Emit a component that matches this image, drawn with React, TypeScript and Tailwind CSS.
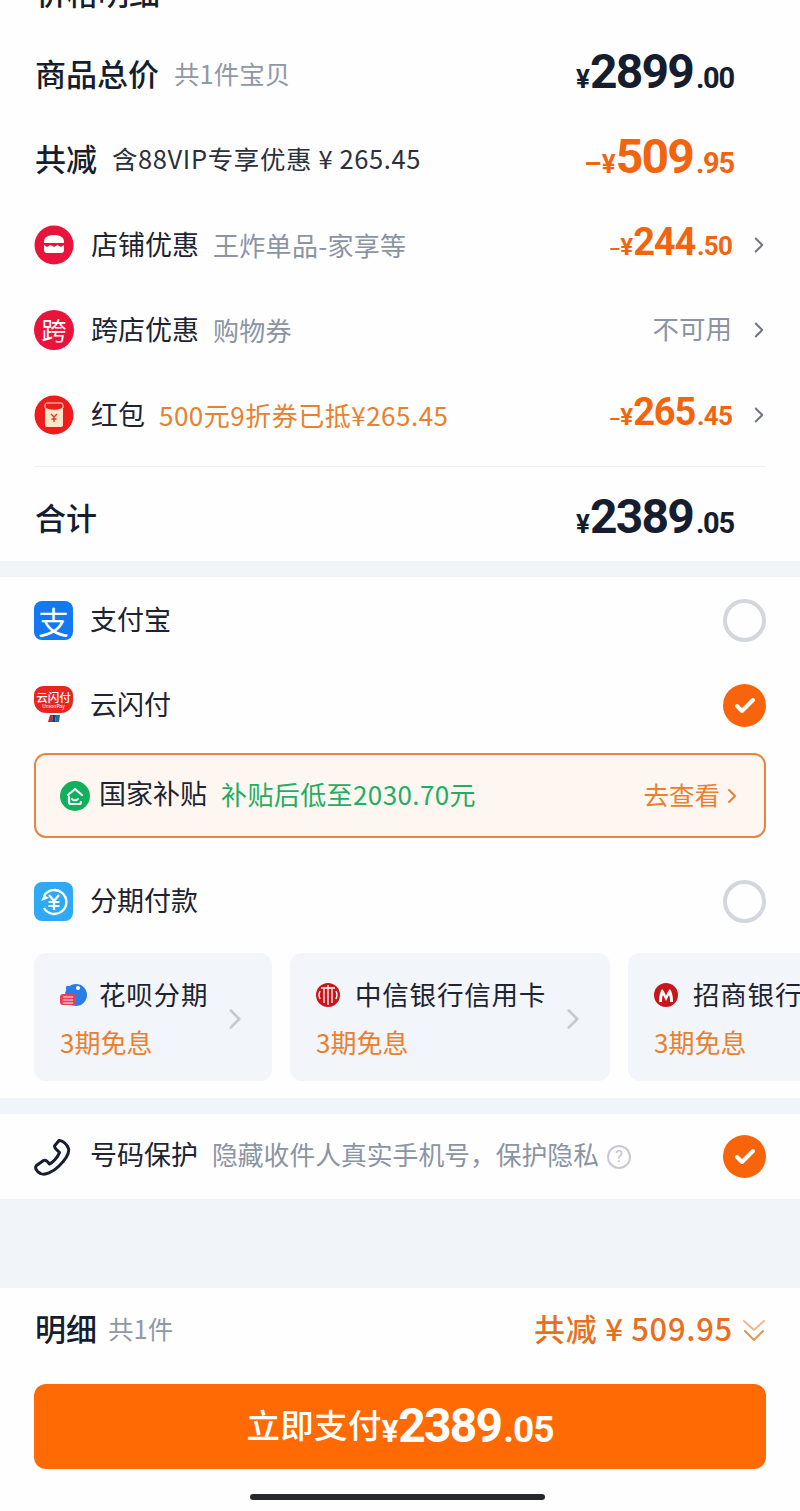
import React from "react";
import { Check, ChevronRight } from "lucide-react";

const cjk = "font-['Noto_Sans_CJK_SC','Noto_Sans',sans-serif]";
const num = "font-['Roboto','Liberation_Sans',sans-serif]";

function Price({ minus, int, dec, orange, mid }: { minus?: boolean; int: string; dec: string; orange?: boolean; mid?: boolean }) {
  const color = orange ? "text-[#f2650f]" : "text-[#161d2e]";
  return (
    <div className={`flex items-baseline font-bold pb-[5px] ${num} ${color}`}>
      {minus && <span className={mid ? "text-[18px] leading-none" : "text-[28px] leading-none"}>–</span>}
      <span className={mid ? "text-[24px] leading-none" : "text-[26px] leading-none"}>¥</span>
      <span className={mid ? "text-[38px] leading-none tracking-[-1.2px]" : "text-[48px] leading-none tracking-[-1.8px]"}>{int}</span>
      <span className={mid ? "text-[26px] leading-none tracking-[-0.8px] ml-[2px]" : "text-[29px] leading-none tracking-[-1.2px] ml-[3px]"}>.{dec}</span>
    </div>
  );
}

function Radio({ checked }: { checked?: boolean }) {
  if (checked) {
    return (
      <div className="w-[43px] h-[43px] rounded-full bg-[#f8640c] flex items-center justify-center">
        <Check size={24} strokeWidth={4} className="text-white" />
      </div>
    );
  }
  return <div className="w-[43px] h-[43px] rounded-full border-[4px] border-[#d3d6dc]" />;
}

function ShopIcon() {
  return (
    <svg width="40" height="40" viewBox="0 0 40 40">
      <circle cx="20" cy="20" r="19.5" fill="#e8143c" />
      <path d="M10 17c0-5 4-7 10-7s10 2 10 7v1H10z" fill="#fff" />
      <path d="M10 20l3 2 3.5-2 3.5 2 3.5-2 3.5 2 3-2v5c0 2-1 3-3 3H13c-2 0-3-1-3-3z" fill="#fff" />
    </svg>
  );
}

function RedPacketIcon() {
  return (
    <svg width="40" height="40" viewBox="0 0 40 40">
      <circle cx="20" cy="20" r="19.5" fill="#ee1c1c" />
      <rect x="11" y="8" width="18" height="24" rx="2" fill="#fbe6c8" />
      <path d="M11 10c0-1 1-2 2-2h14c1 0 2 1 2 2v3c-5 3-13 3-18 0z" fill="#ee1c1c" stroke="#fbe6c8" strokeWidth="1" />
      <path d="M17 19l3 3 3-3M20 22v5M17.500 24h5" stroke="#d9342b" strokeWidth="1.300" fill="none" />
    </svg>
  );
}

function CrossIcon() {
  return (
    <div className={`w-[40px] h-[40px] rounded-full bg-[#e8143c] flex items-center justify-center text-white text-[25px] leading-none ${cjk}`}>跨</div>
  );
}

function AlipayIcon() {
  return (
    <div className={`w-[39px] h-[39px] rounded-[8px] bg-[#1478f0] flex items-center justify-center text-white text-[31px] leading-none ${cjk}`}>支</div>
  );
}

function UnionIcon() {
  return (
    <div className="w-[39px] h-[39px] flex flex-col items-center">
      <div className={`w-[39px] h-[27px] rounded-t-[9px] rounded-b-[12px] bg-[#e8261f] flex flex-col items-center justify-center text-white ${cjk}`}>
        <span className="text-[11.5px] leading-[12px] font-medium">云闪付</span>
        <span className="text-[5px] leading-[5px]">UnionPay</span>
      </div>
      <svg width="12" height="7" viewBox="0 0 12 7" className="mt-[2px]">
        <path d="M2 0h3L4 7H0z" fill="#d3202a" />
        <path d="M5 0h3L7 7H4z" fill="#0d3b82" />
        <path d="M8 0h4l-1 7H7z" fill="#0b7c86" />
      </svg>
    </div>
  );
}

function SubsidyIcon() {
  return (
    <svg width="30" height="30" viewBox="0 0 30 30">
      <circle cx="15" cy="15" r="15" fill="#12b05c" />
      <path d="M8 14l7-6 7 6" stroke="#fff" strokeWidth="2.200" fill="none" strokeLinecap="round" strokeLinejoin="round" />
      <path d="M9 16v5c0 1 1 2 2 2h8c1 0 2-1 2-2" stroke="#fff" strokeWidth="2.200" fill="none" strokeLinecap="round" />
      <path d="M12 18c1 1.500 4 2 6 0" stroke="#fff" strokeWidth="1.800" fill="none" strokeLinecap="round" />
    </svg>
  );
}

function InstallIcon() {
  return (
    <div className={`w-[39px] h-[39px] rounded-[8px] bg-[#2fa8f5] flex items-center justify-center`}>
      <svg width="30" height="30" viewBox="0 0 30 30">
        <path d="M5 9A12 12 0 1 1 5 21" stroke="#fff" strokeWidth="2.400" fill="none" />
        <path d="M2 14l3-6 5 3z" fill="#fff" />
        <path d="M10 8l5 6 5-6M9.500 15h11M9.500 19h11M15 14v9" stroke="#fff" strokeWidth="2.200" fill="none" />
      </svg>
    </div>
  );
}

function HuabeiIcon() {
  return (
    <svg width="27" height="24" viewBox="0 0 27 24">
      <circle cx="16" cy="12" r="11" fill="#2a7de8" />
      <circle cx="18" cy="5" r="2" fill="#fff" />
      <circle cx="8" cy="5" r="2.200" fill="#2a7de8" />
      <rect x="0" y="11" width="16" height="11" rx="3" fill="#ee3b5a" />
      <path d="M3 14h10M3 17h10M3 20h10" stroke="#fff" strokeWidth="0.900" />
    </svg>
  );
}

function CiticIcon() {
  return (
    <svg width="24" height="24" viewBox="0 0 24 24">
      <circle cx="12" cy="12" r="12" fill="#c8161d" />
      <path d="M12 2v20M8 6v14M16 6v14M4 8a9 9 0 0 0 0 8M20 8a9 9 0 0 1 0 8M5 5h14" stroke="#fff" strokeWidth="1.300" fill="none" />
    </svg>
  );
}

function CmbIcon() {
  return (
    <svg width="24" height="24" viewBox="0 0 24 24">
      <circle cx="12" cy="12" r="12" fill="#c8161d" />
      <path d="M5 19c0-6 1-10 3-13 2 2 3 4 4 7 1-3 2-5 4-7 2 3 3 7 3 13h-3c0-3 0-5-1-7l-3 6-3-6c-1 2-1 4-1 7z" fill="#fff" />
    </svg>
  );
}

function PhoneIcon() {
  return (
    <svg width="37" height="38" viewBox="0 0 37 38" fill="none">
      <path
        d="M25 2.500c3-.5 8 3.500 9.500 8 1 4-2.500 10.500-9.500 17.500-6.500 6.500-14 9.500-18.500 7.500C2.500 34 .5 29.500 2.500 27.500l7-5c2-1 4.500 1.500 6 3.500 3-1 8.500-7 10-11.500-2-2-5-4-5-6.500z"
        stroke="#161d2e"
        strokeWidth="3"
        strokeLinejoin="round"
      />
    </svg>
  );
}

function DoubleDown() {
  return (
    <svg width="24" height="26" viewBox="0 0 24 26" fill="none" className="ml-[9px]">
      <path d="M2 3l10 9 10-9" stroke="#eeb88f" strokeWidth="2" strokeLinecap="round" strokeLinejoin="round" />
      <path d="M3 13l9 9 9-9" stroke="#e89358" strokeWidth="2" strokeLinecap="round" strokeLinejoin="round" />
    </svg>
  );
}

function DiscountRow({ icon, title, sub, subOrange, right }: { icon: React.ReactNode; title: string; sub: string; subOrange?: boolean; right: React.ReactNode }) {
  return (
    <div className="h-[85px] flex items-center px-[34px]">
      <div className="w-[57px] shrink-0">{icon}</div>
      <span className="text-[27px] text-[#1d2330]">{title}</span>
      <span className={`ml-[14px] text-[26px] ${subOrange ? "tracking-[0.5px] text-[#e8802f]" : "tracking-[0.3px] text-[#8a94a3]"}`}>{sub}</span>
      <div className="ml-auto flex items-center">
        {right}
        <ChevronRight size={26} strokeWidth={1.800} className="text-[#6f7580] ml-[14px] mr-[-6px]" />
      </div>
    </div>
  );
}

function PayRow({ icon, title }: { icon: React.ReactNode; title: string; }) {
  return (
    <div className="flex items-center">
      <div className="w-[57px]">{icon}</div>
      <span className="text-[27px] text-[#1d2330] -ml-[1px] pb-[2px]">{title}</span>
    </div>
  );
}

function InstallCard({ icon, title, width, arrow }: { icon: React.ReactNode; title: string; width: string; arrow?: boolean }) {
  return (
    <div className={`${width} h-[128px] shrink-0 rounded-[12px] bg-[#f2f5f9] relative pl-[26px] pt-[23px]`}>
      <div className="flex items-center h-[36px]">
        <div className="w-[39px] pt-[2px]">{icon}</div>
        <span className="text-[26.500px] leading-none tracking-[0.8px] text-[#1d2330] whitespace-nowrap">{title}</span>
      </div>
      <div className="mt-[12px] text-[26px] leading-[36px] text-[#e8802f]">3期免息</div>
      {arrow && <ChevronRight size={34} strokeWidth={1.800} className="absolute right-[20px] top-[49px] text-[#c5c9cf]" />}
    </div>
  );
}

export default function App() {
  return (
    <div className={`w-[800px] h-[1511px] overflow-hidden bg-[#fefefe] ${cjk}`}>
      <div className="h-[32px] px-[36px] overflow-hidden">
        <div className="text-[31px] leading-[40px] font-medium text-[#161d2e] -mt-[28px]">价格明细</div>
      </div>

      <div className="h-[85px] flex items-center justify-between pl-[35px] pr-[66px]">
        <div className="flex items-center pb-[3px]">
          <span className="text-[31px] font-medium text-[#161d2e]">商品总价</span>
          <span className="text-[25.500px] text-[#8f98a5] ml-[15px]">共1件宝贝</span>
        </div>
        <Price int="2899" dec="00" />
      </div>
      <div className="h-[85px] flex items-center justify-between pl-[35px] pr-[66px]">
        <div className="flex items-center pb-[2px]">
          <span className="text-[31px] font-medium text-[#161d2e]">共减</span>
          <span className="text-[25.500px] tracking-[0.6px] text-[#2b303b] ml-[15px]">含88VIP专享优惠 ¥ 265.45</span>
        </div>
        <Price minus orange int="509" dec="95" />
      </div>

      <DiscountRow icon={<ShopIcon />} title="店铺优惠" sub="王炸单品-家享等" right={<Price minus orange mid int="244" dec="50" />} />
      <DiscountRow icon={<CrossIcon />} title="跨店优惠" sub="购物券" right={<span className="text-[26.500px] text-[#8a94a3] pb-[3px]">不可用</span>} />
      <DiscountRow icon={<RedPacketIcon />} title="红包" sub="500元9折券已抵¥265.45" subOrange right={<Price minus orange mid int="265" dec="45" />} />

      <div className="mx-[34px] mt-[9px] h-[1px] bg-[#eff1f4]" />
      <div className="h-[94px] pt-[10px] flex items-center justify-between pl-[35px] pr-[66px]">
        <span className="text-[31px] font-medium text-[#161d2e] pb-[4px]">合计</span>
        <Price int="2389" dec="05" />
      </div>

      <div className="h-[16px] bg-[#f1f5f9]" />

      <div className="h-[86px] flex items-center justify-between px-[34px]">
        <PayRow icon={<AlipayIcon />} title="支付宝" />
        <Radio />
      </div>
      <div className="h-[85px] flex items-center justify-between px-[34px]">
        <PayRow icon={<UnionIcon />} title="云闪付" />
        <Radio checked />
      </div>

      <div className="mx-[34px] mt-[5px] h-[85px] rounded-[12px] border-2 border-[#e6853f] bg-[#fef6f0] flex items-center pl-[24px] pr-[24px]">
        <SubsidyIcon />
        <span className="text-[27px] text-[#1d2330] ml-[9px] pb-[4px]">国家补贴</span>
        <span className="text-[26px] tracking-[0.4px] text-[#1fae63] ml-[14px] pb-[4px]">补贴后低至2030.70元</span>
        <span className="text-[25.500px] text-[#e8802f] ml-auto pb-[3px]">去查看</span>
        <ChevronRight size={24} strokeWidth={2} className="text-[#e8802f] mr-[-4px]" />
      </div>

      <div className="h-[85px] mt-[21px] flex items-center justify-between px-[34px]">
        <PayRow icon={<InstallIcon />} title="分期付款" />
        <Radio />
      </div>

      <div className="flex gap-[18px] pl-[34px] overflow-hidden mt-[9px]">
        <InstallCard width="w-[238px]" icon={<HuabeiIcon />} title="花呗分期" arrow />
        <InstallCard width="w-[320px]" icon={<CiticIcon />} title="中信银行信用卡" arrow />
        <InstallCard width="w-[320px]" icon={<CmbIcon />} title="招商银行信用卡" />
      </div>

      <div className="h-[16px] mt-[17px] bg-[#f1f5f9]" />

      <div className="h-[85px] flex items-center justify-between px-[34px]">
        <div className="flex items-center">
          <div className="w-[56px] pt-[1px]"><PhoneIcon /></div>
          <span className="text-[27px] text-[#1d2330] pb-[4px]">号码保护</span>
          <span className="text-[25.800px] text-[#8a94a3] ml-[14px] pb-[4px]">隐藏收件人真实手机号，保护隐私</span>
          <span className={`ml-[8px] w-[24px] h-[24px] rounded-full border-2 border-[#c6cad0] text-[#c0c4ca] text-[16px] leading-none flex items-center justify-center ${num}`}>?</span>
        </div>
        <Radio checked />
      </div>

      <div className="h-[89px] bg-[#f1f5f9]" />

      <div className="h-[85px] flex items-center justify-between pl-[35px] pr-[34px]">
        <div className="flex items-center pb-[4px]">
          <span className="text-[31px] font-medium text-[#161d2e]">明细</span>
          <span className="text-[25.500px] text-[#8f98a5] ml-[11px]">共1件</span>
        </div>
        <div className="flex items-center text-[#e86f1c]">
          <span className="text-[31px] tracking-[0.7px] font-medium pb-[4px]">共减 ¥ 509.95</span>
          <DoubleDown />
        </div>
      </div>

      <div className="mx-[34px] mt-[11px] h-[85px] rounded-[12px] bg-[#ff6a05] flex items-center justify-center text-white">
        <span className="text-[33.500px] tracking-[0.3px] font-medium pb-[4px]">立即支付</span>
        <span className={`flex items-baseline font-bold pb-[2px] ${num}`}>
          <span className="text-[31px] leading-none">¥</span>
          <span className="text-[48px] leading-none tracking-[-1.8px]">2389</span>
          <span className="text-[37px] leading-none tracking-[-1px] ml-[2px]">.05</span>
        </span>
      </div>

      <div className="ml-[250px] mt-[25px] w-[295px] h-[6px] rounded-full bg-[#27282c]" />
    </div>
  );
}
